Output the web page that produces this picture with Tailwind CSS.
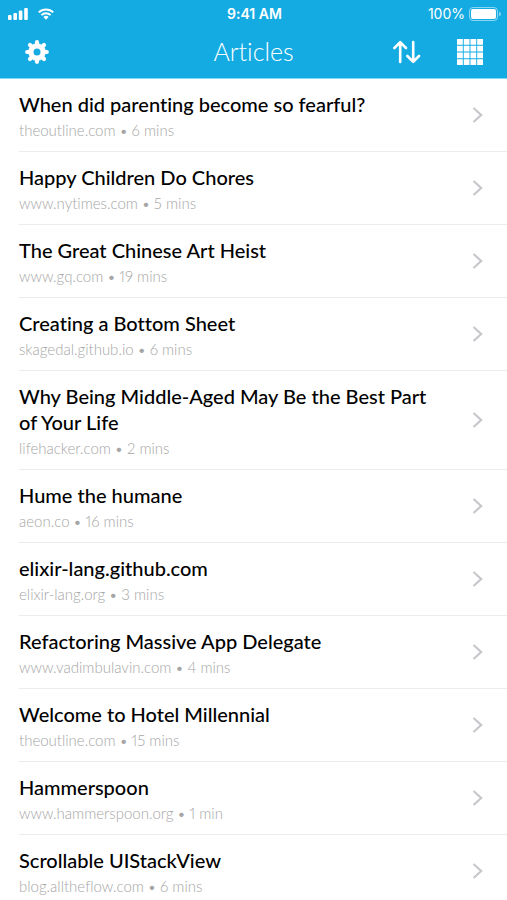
<!DOCTYPE html>
<html lang="en">
<head>
<meta charset="utf-8">
<meta name="viewport" content="width=device-width, initial-scale=1">
<title>Articles</title>
<script src="https://cdn.jsdelivr.net/npm/@tailwindcss/browser@4"></script>
</head>
<body class="flex h-screen flex-col bg-white font-['Lato',sans-serif] text-black [font-variant-ligatures:none]">
<header class="shrink-0 border-b border-[#7fdcf7] bg-[#14abe3] text-white">
  <div class="grid h-7 grid-cols-3 items-center pr-1.5 pl-2 font-['Inter',sans-serif] text-sm">
    <div class="flex items-center gap-2.5">
      <svg class="h-3 w-5" viewBox="0 0 20 12" fill="currentColor" role="img" aria-label="Signal">
        <rect x="0" y="7" width="3.6" height="5" rx="1"/><rect x="5.4" y="5" width="3.6" height="7" rx="1"/><rect x="10.8" y="2.5" width="3.6" height="9.5" rx="1"/><rect x="16.2" y="0" width="3.6" height="12" rx="1"/>
      </svg>
      <svg class="h-3 w-4" viewBox="0 0 17 12" fill="none" stroke="currentColor" stroke-width="2.1" role="img" aria-label="Wi-Fi">
        <path d="M.8 4.3a11 11 0 0 1 15.4 0M3.6 7.2a7 7 0 0 1 9.8 0"/><path d="M5.7 9.3a4 4 0 0 1 5.6 0L8.5 12z" fill="currentColor" stroke="none"/>
      </svg>
    </div>
    <p class="text-center font-semibold whitespace-nowrap">9:41 AM</p>
    <div class="flex items-center justify-end gap-1">
      <span>100%</span>
      <svg class="h-[14px] w-8" viewBox="0 0 32 14" fill="currentColor" role="img" aria-label="Battery full">
        <rect x=".5" y=".5" width="28" height="13" rx="3.5" fill="none" stroke="currentColor" stroke-opacity=".5"/><rect x="2" y="2" width="25" height="10" rx="2"/><path d="M30 5v4a2 2 0 0 0 0-4z" opacity=".5"/>
      </svg>
    </div>
  </div>
  <div class="grid h-[50px] grid-cols-[1fr_auto_1fr] items-center px-6 pb-0.5">
    <button type="button" aria-label="Settings" class="w-fit">
      <svg class="size-[26px]" viewBox="-13 -13 26 26" fill="currentColor">
        <path fill-rule="evenodd" d="M0-8.7A8.7 8.7 0 1 0 0 8.7 8.7 8.7 0 1 0 0-8.7zM0-3.5A3.5 3.5 0 1 1 0 3.5 3.5 3.5 0 1 1 0-3.5z"/>
        <g stroke="currentColor" stroke-width="4.2" stroke-linecap="round"><path d="M0-8v-1.8M0 8v1.8M-8 0h-1.8M8 0h1.8M-5.8-5.8l-1.2-1.2M5.8 5.8l1.2 1.2M-5.8 5.8l-1.2 1.2M5.8-5.8l1.2-1.2"/></g>
      </svg>
    </button>
    <h1 class="text-[25px] font-light">Articles</h1>
    <div class="flex items-center justify-end gap-9">
      <button type="button" aria-label="Sort">
        <svg class="h-6 w-7" viewBox="0 0 28 24" fill="none" stroke="currentColor" stroke-width="2.6" stroke-linecap="round" stroke-linejoin="round"><path d="M7.2 22V2.2M1.4 8l5.8-5.8L13 8M20.2 2v19.8M14.4 16l5.8 5.8L26 16"/></svg>
      </button>
      <button type="button" aria-label="Grid view">
        <svg class="size-[26px]" viewBox="0 0 26 26" fill="none" stroke="currentColor" stroke-width="5.8"><path stroke-dasharray="5.8 .93" d="M0 2.9h26M0 9.63h26M0 16.37h26M0 23.1h26"/></svg>
      </button>
    </div>
  </div>
</header>
<main class="min-h-0 flex-1 overflow-y-auto [scrollbar-width:none]">
  <ul id="articles" class="pl-[19px]"></ul>
</main>
<template id="row">
  <li class="border-b border-[#ececec]">
    <a href="#" class="flex items-center gap-6 pr-6">
      <div class="min-w-0 flex-1 pt-3 pb-2">
        <h2 class="text-xl/[26px] font-medium"></h2>
        <p class="text-[15px]/[26px] font-light text-[#a6a6a6] proportional-nums"><span></span> <span class="font-['Inter',sans-serif] text-sm/none font-normal">•</span> <span></span></p>
      </div>
      <svg class="h-4 w-[11px] shrink-0" viewBox="0 0 11 16" fill="none" stroke="#c7c7cc" stroke-width="2.2"><path d="M1.5 1l7.7 7-7.7 7"/></svg>
    </a>
  </li>
</template>
<script>
const articles = [
  ["When did parenting become so fearful?", "theoutline.com", "6 mins"],
  ["Happy Children Do Chores", "www.nytimes.com", "5 mins"],
  ["The Great Chinese Art Heist", "www.gq.com", "19 mins"],
  ["Creating a Bottom Sheet", "skagedal.github.io", "6 mins"],
  ["Why Being Middle-Aged May Be the Best Part of Your Life", "lifehacker.com", "2 mins"],
  ["Hume the humane", "aeon.co", "16 mins"],
  ["elixir-lang.github.com", "elixir-lang.org", "3 mins"],
  ["Refactoring Massive App Delegate", "www.vadimbulavin.com", "4 mins"],
  ["Welcome to Hotel Millennial", "theoutline.com", "15 mins"],
  ["Hammerspoon", "www.hammerspoon.org", "1 min"],
  ["Scrollable UIStackView", "blog.alltheflow.com", "6 mins"],
];
const list = document.getElementById("articles");
const row = document.getElementById("row");
for (const [title, site, time] of articles) {
  const item = row.content.cloneNode(true);
  item.querySelector("h2").textContent = title;
  item.querySelector("p").firstElementChild.textContent = site;
  item.querySelector("p").lastElementChild.textContent = time;
  list.append(item);
}
</script>
</body>
</html>
